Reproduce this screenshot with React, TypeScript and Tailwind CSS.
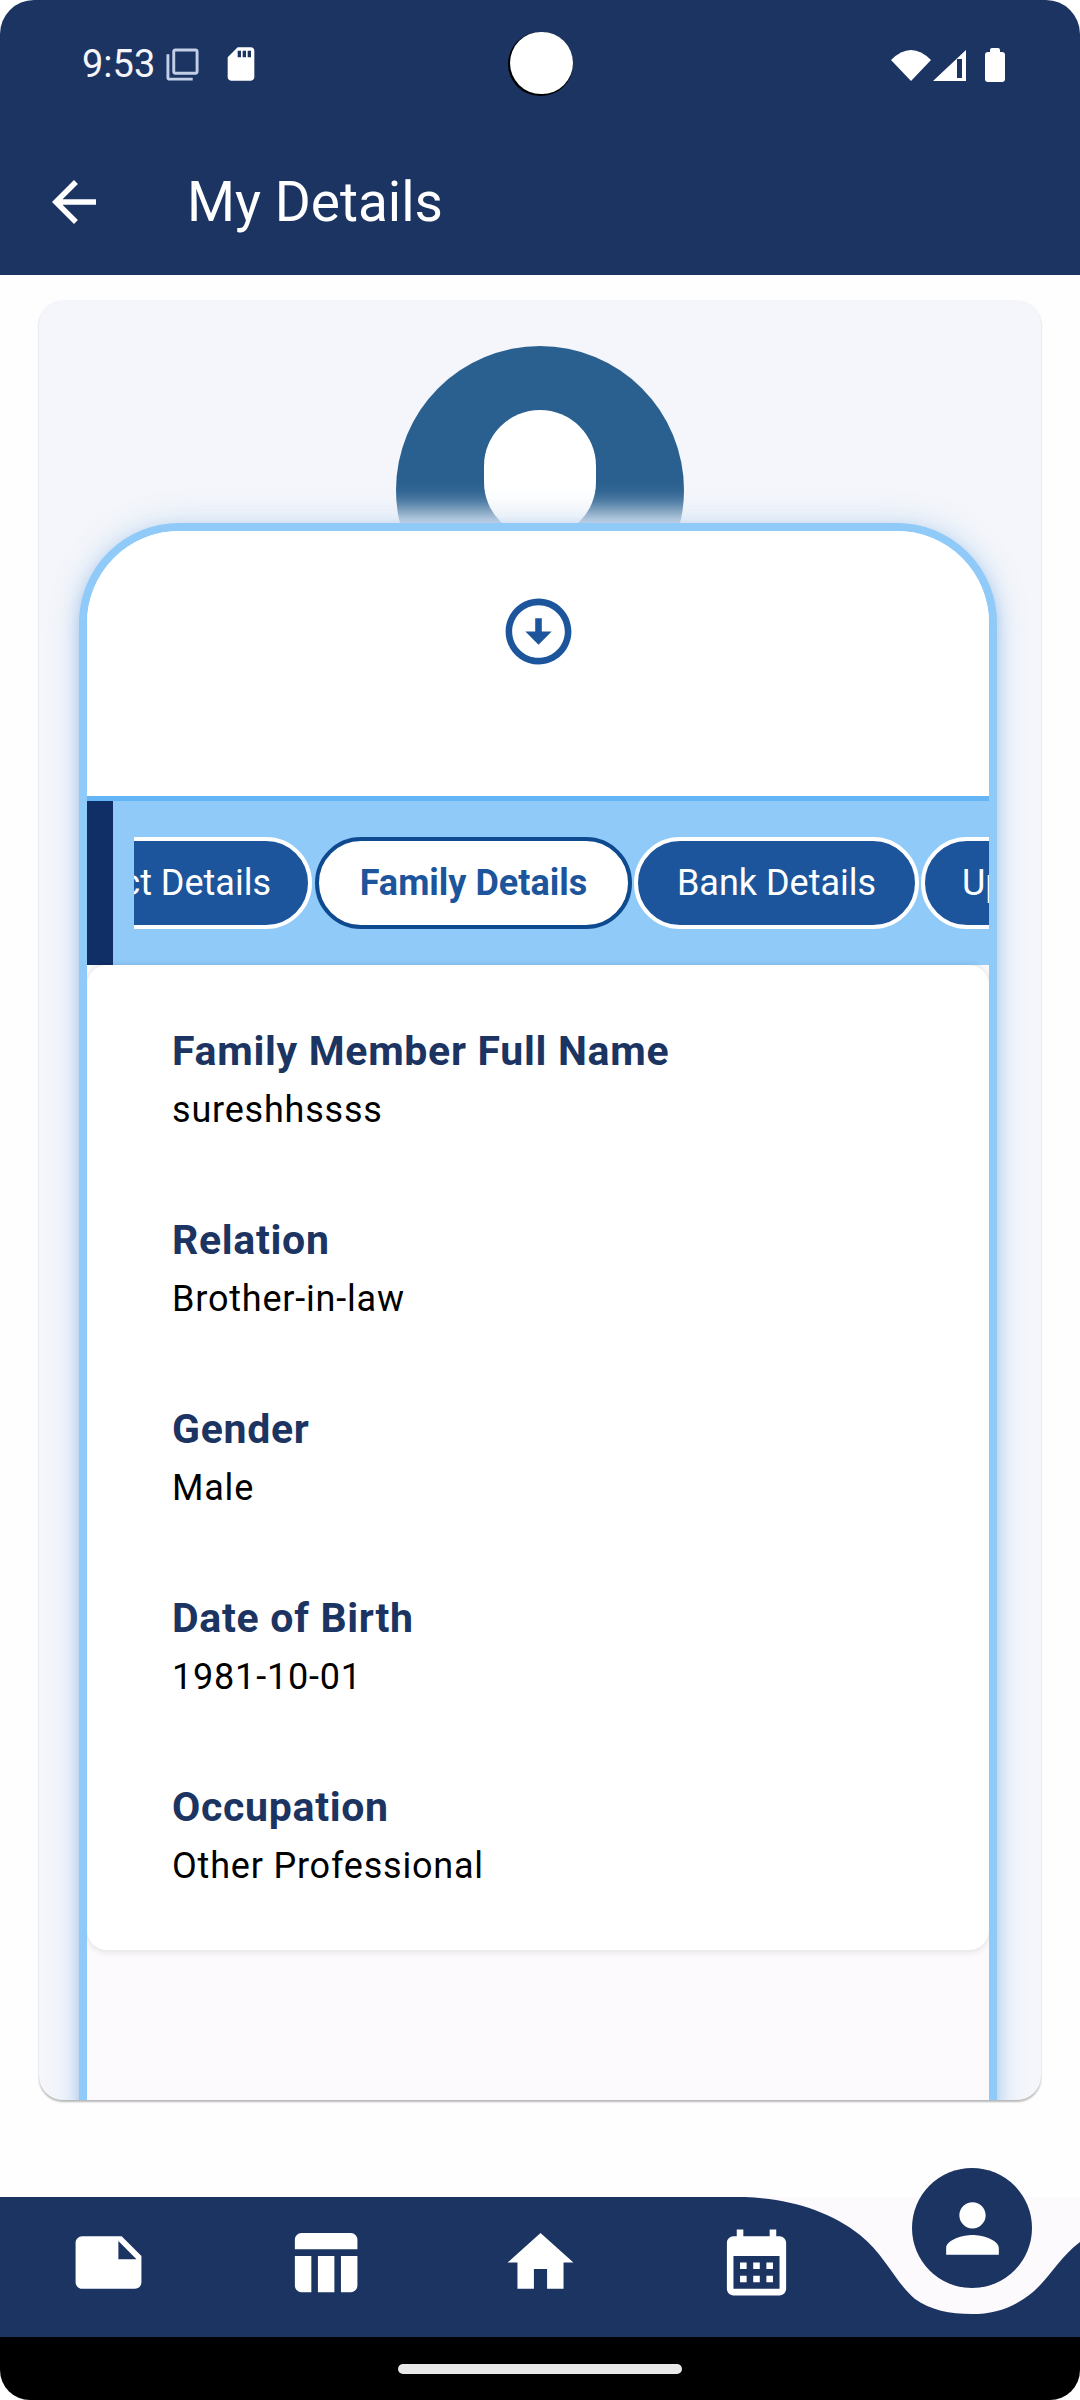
import React from "react";

const NAVY = "#1c3461";

function Mat({ d, size, fill = "#ffffff", className = "" }: { d: string; size: number; fill?: string; className?: string }) {
  return (
    <svg width={size} height={size} viewBox="0 0 24 24" className={`block shrink-0 ${className}`}>
      <path d={d} fill={fill} />
    </svg>
  );
}

const icons = {
  back: "M20 11H7.83l5.59-5.59L12 4l-8 8 8 8 1.41-1.41L7.83 13H20v-2z",
  layers: "M3 5H1v16c0 1.1.9 2 2 2h16v-2H3V5zm18-4H7c-1.1 0-2 .9-2 2v14c0 1.1.9 2 2 2h14c1.1 0 2-.9 2-2V3c0-1.1-.9-2-2-2zm0 16H7V3h14v14z",
  sd: "M18 2h-8L4.02 8 4 20c0 1.1.9 2 2 2h12c1.1 0 2-.9 2-2V4c0-1.1-.9-2-2-2zm-6 6h-2V4h2v4zm3 0h-2V4h2v4zm3 0h-2V4h2v4z",
  download: "M12 4c4.41 0 8 3.59 8 8s-3.59 8-8 8-8-3.59-8-8 3.59-8 8-8m0-2C6.48 2 2 6.48 2 12s4.48 10 10 10 10-4.48 10-10S17.52 2 12 2zm1 10V8h-2v4H8l4 4 4-4h-3z",
  note: "M22 10l-6-6H4c-1.1 0-2 .9-2 2v12.01c0 1.1.9 1.99 2 1.99l16-.01c1.1 0 2-.89 2-1.99v-8zm-7-4.5 5.5 5.5H15V5.5z",
  table: "M10 10.02h5V21h-5zM17 21h3c1.1 0 2-.9 2-2v-9h-5v11zm3-18H5c-1.1 0-2 .9-2 2v3h19V5c0-1.1-.9-2-2-2zM3 19c0 1.1.9 2 2 2h3V10H3v9z",
  home: "M10 20v-6h4v6h5v-8h3L12 3 2 12h3v8z",
  calendar: "M19 4h-1V2h-2v2H8V2H6v2H5c-1.11 0-1.99.9-1.99 2L3 20c0 1.1.89 2 2 2h14c1.1 0 2-.9 2-2V6c0-1.1-.9-2-2-2zm0 16H5V10h14v10zM9 14H7v-2h2v2zm4 0h-2v-2h2v2zm4 0h-2v-2h2v2zm-8 4H7v-2h2v2zm4 0h-2v-2h2v2zm4 0h-2v-2h2v2z",
  person: "M12 12c2.21 0 4-1.79 4-4s-1.79-4-4-4-4 1.79-4 4 1.79 4 4 4zm0 2c-2.67 0-8 1.34-8 4v2h16v-2c0-2.66-5.33-4-8-4z",
};

const rows = [
  ["Family Member Full Name", "sureshhssss"],
  ["Relation", "Brother-in-law"],
  ["Gender", "Male"],
  ["Date of Birth", "1981-10-01"],
  ["Occupation", "Other Professional"],
];

function StatusBar() {
  return (
    <div className="grid grid-cols-[1fr_65px_1fr] items-center h-[128px]">
      <div className="flex items-center pl-[82px]">
        <span className="text-[38px] leading-[44px] text-[#f4f6fa] w-[83px]">9:53</span>
        <Mat d={icons.layers} size={35} fill="#c3cfe6" />
        <Mat d={icons.sd} size={40} className="ml-[21px]" />
      </div>
      <div className="w-[65px] h-[64px] rounded-full bg-black">
        <div className="w-[63px] h-[62px] ml-[2px] rounded-full bg-white" />
      </div>
      <div className="flex items-center justify-end pr-[75px] pt-[2px]">
        <svg width="40" height="32" viewBox="0 0 40 32" className="block">
          <path d="M0 11 Q20 -9 40 11 L20 32 Z" fill="#ffffff" />
        </svg>
        <svg width="33" height="31" viewBox="0 0 33 31" className="block ml-[2px]">
          <path fillRule="evenodd" d="M33 0 V31 H0 Z M24 9 V28 H29 V9 Z" fill="#ffffff" />
        </svg>
        <svg width="20" height="34" viewBox="0 0 20 34" className="block ml-[19px]">
          <path d="M5 4 V2 Q5 0 7 0 H13 Q15 0 15 2 V4 H17 Q20 4 20 7 V31 Q20 34 17 34 H3 Q0 34 0 31 V7 Q0 4 3 4 Z" fill="#ffffff" />
        </svg>
      </div>
    </div>
  );
}

function Header() {
  return (
    <header className="h-[275px] shrink-0 rounded-t-[34px] bg-[#1c3461] text-white">
      <StatusBar />
      <div className="flex items-center h-[147px] pl-[41px]">
        <Mat d={icons.back} size={66} />
        <h1 className="ml-[80px] text-[55px] leading-[64px] font-normal">My Details</h1>
      </div>
    </header>
  );
}

function Tabs() {
  return (
    <div className="flex h-[169px] border-t-[5px] border-[#64b5f6] bg-[#90caf9]">
      <div className="w-[26px] shrink-0 bg-[#0f2f66]" />
      <div className="ml-[21px] flex flex-1 items-center overflow-hidden text-[36px]">
        <div className="flex w-[178px] shrink-0 justify-end overflow-hidden">
          <div className="flex h-[92px] shrink-0 items-center rounded-full border-[4px] border-white bg-[#1c559c] px-[37px] text-white">Contact Details</div>
        </div>
        <div className="ml-[3px] flex h-[92px] w-[317px] shrink-0 items-center justify-center rounded-full border-[4px] border-[#0d4a8f] bg-white font-bold text-[#1c559c]">Family Details</div>
        <div className="ml-[2px] flex h-[92px] w-[285px] shrink-0 items-center justify-center rounded-full border-[4px] border-white bg-[#1c559c] text-white">Bank Details</div>
        <div className="ml-[2px] flex h-[92px] shrink-0 items-center rounded-full border-[4px] border-white bg-[#1c559c] px-[37px] text-white">Upload Documents</div>
      </div>
    </div>
  );
}

function Details() {
  return (
    <div className="relative rounded-[20px] bg-white pl-[85px] pt-[57px] pb-[54px] shadow-[0_3px_6px_rgba(0,0,0,0.08),0_-2px_5px_rgba(0,0,0,0.07)]">
      <div className="flex flex-col gap-[71px]">
        {rows.map(([label, value]) => (
          <div key={label}>
            <div className="text-[41px] leading-[59px] font-bold tracking-[0.7px] text-[#1c3461]">{label}</div>
            <div className="text-[36px] leading-[59px] tracking-[0.8px] text-black">{value}</div>
          </div>
        ))}
      </div>
    </div>
  );
}

function Card() {
  return (
    <section className="ml-[39px] mt-[25px] h-[1800px] w-[1002px] overflow-hidden rounded-[24px] bg-[#f5f6fb] shadow-[0_2px_2px_rgba(0,0,0,0.28)]">
      <div className="mx-auto mt-[46px] flex h-[288px] w-[288px] items-center justify-center rounded-full bg-[#2a608f]">
        <div className="-mt-[32px] h-[128px] w-[112px] rounded-full bg-white" />
      </div>
      <div className="relative -mt-[111px] ml-[40px] h-[1700px] w-[918px] overflow-hidden rounded-t-[100px] border-[8px] border-[#90caf9] bg-[#fdfafd] shadow-[0_6px_16px_rgba(110,160,225,0.55),0_0_26px_12px_#e2ecf7]">
        <div className="h-[265px] bg-white pt-[61px]">
          <Mat d={icons.download} size={79} fill="#1c559c" className="mx-auto" />
        </div>
        <Tabs />
        <Details />
      </div>
    </section>
  );
}

function BottomNav() {
  const cell = "flex justify-center pt-[26px]";
  return (
    <nav className="relative mt-auto h-[140px] shrink-0 bg-[#fdfafd]">
      <svg viewBox="0 0 1080 140" className="absolute inset-0 h-full w-full">
        <path
          d="M0 0 L745 0 C790 2 830 14 860 38 C885 58 895 85 915 102 C930 113 950 117 972 117 C995 117 1015 110 1033 95 C1050 80 1060 60 1080 45 L1080 140 L0 140 Z"
          fill={NAVY}
        />
      </svg>
      <div className="relative grid grid-cols-5">
        <div className={cell}><Mat d={icons.note} size={79} /></div>
        <div className={cell}><Mat d={icons.table} size={79} /></div>
        <div className={cell}><Mat d={icons.home} size={79} /></div>
        <div className={cell}><Mat d={icons.calendar} size={79} /></div>
        <div className="flex justify-center">
          <div className="-mt-[29px] flex h-[120px] w-[120px] items-center justify-center rounded-full bg-[#1c3461]">
            <Mat d={icons.person} size={79} />
          </div>
        </div>
      </div>
    </nav>
  );
}

export default function App() {
  return (
    <div className="flex h-[2400px] w-[1080px] flex-col overflow-hidden bg-white font-['Roboto',sans-serif]">
      <Header />
      <main className="flex flex-1 flex-col bg-[#fefefe]">
        <Card />
        <BottomNav />
      </main>
      <footer className="flex h-[63px] shrink-0 items-start justify-center rounded-b-[30px] bg-black pt-[27px]">
        <div className="h-[10px] w-[284px] rounded-full bg-[#e8e8e8]" />
      </footer>
    </div>
  );
}
